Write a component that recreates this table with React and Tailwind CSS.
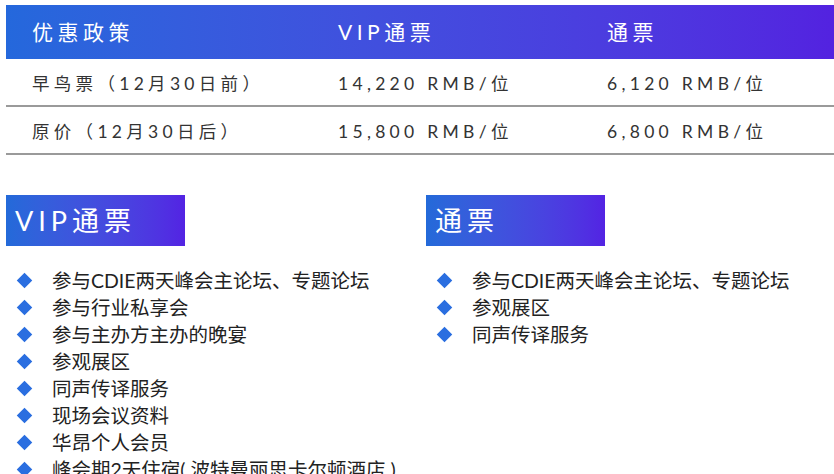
const rows = [
  { label: '早鸟票（12月30日前）', vip: '14,220 RMB/位', pass: '6,120 RMB/位' },
  { label: '原价（12月30日后）', vip: '15,800 RMB/位', pass: '6,800 RMB/位' },
];

const vipItems = [
  '参与CDIE两天峰会主论坛、专题论坛',
  '参与行业私享会',
  '参与主办方主办的晚宴',
  '参观展区',
  '同声传译服务',
  '现场会议资料',
  '华昂个人会员',
  '峰会期2天住宿( 波特曼丽思卡尔顿酒店 )',
];

const passItems = ['参与CDIE两天峰会主论坛、专题论坛', '参观展区', '同声传译服务'];

const Diamond = () => (
  <span className="inline-block w-[11px] h-[11px] bg-[#2a6ee0] rotate-45 shrink-0" />
);

const Benefits = ({ title, items, className }) => (
  <div className={className}>
    <div className="w-[179px] h-[51px] flex items-center pl-[9px] bg-gradient-to-r from-[#236ad9] to-[#5323e3] text-white text-[27px] tracking-[5px] leading-none">
      {title}
    </div>
    <ul className="mt-[21px] flex flex-col">
      {items.map((item) => (
        <li key={item} className="h-[27px] flex items-center text-[19.5px] text-[#222] leading-none">
          <span className="w-[46px] flex justify-start pl-[13px]">
            <Diamond />
          </span>
          <span className="whitespace-pre">{item}</span>
        </li>
      ))}
    </ul>
  </div>
);

const App = () => {
  return (
    <div
      className="w-[834px] h-[474px] overflow-hidden bg-white pt-[5px]"
      style={{ fontFamily: "Lato, 'Noto Sans CJK SC', sans-serif" }}
    >
      {/* pricing table */}
      <div className="ml-[6px]">
        <div className="h-[54px] flex items-center bg-gradient-to-r from-[#2468dc] to-[#5322e0] text-white text-[21px] tracking-[4.5px]">
          <div className="w-[332px] pl-[26px]">优惠政策</div>
          <div className="w-[269px]">VIP通票</div>
          <div>通票</div>
        </div>
        {rows.map((r) => (
          <div
            key={r.label}
            className="h-[48px] flex items-center pt-[4px] border-b-2 border-[#9a9a9a] text-[17.5px] tracking-[4.3px] text-[#333]"
          >
            <div className="w-[332px] pl-[26px] whitespace-nowrap">{r.label}</div>
            <div className="w-[269px] whitespace-nowrap">{r.vip}</div>
            <div className="whitespace-nowrap">{r.pass}</div>
          </div>
        ))}
      </div>

      {/* ticket benefits */}
      <div className="mt-[40px] ml-[6px] flex">
        <Benefits title="VIP通票" items={vipItems} className="w-[420px] shrink-0" />
        <Benefits title="通票" items={passItems} className="flex-1" />
      </div>
    </div>
  );
};

export default App;
